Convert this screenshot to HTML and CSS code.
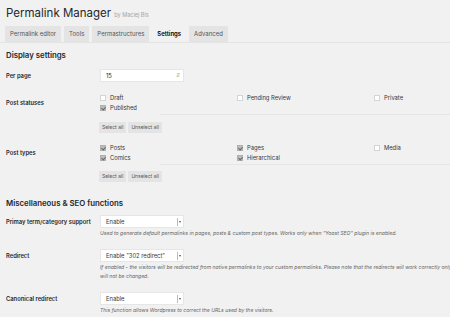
FILE: index.html
```html
<!DOCTYPE html>
<html lang="en">
<head>
    <meta charset="UTF-8">
    <title>Permalink Manager</title>
    <link rel="stylesheet" href="styles.css">
</head>
<body>
<div class="wrap">
    <h1 class="title">Permalink Manager <small>by Maciej Bis</small></h1>
    <ul class="tabs">
        <li>Permalink editor</li>
        <li>Tools</li>
        <li>Permastructures</li>
        <li class="on">Settings</li>
        <li>Advanced</li>
    </ul>

    <h2 class="section">Display settings</h2>
    <div class="row row-perpage">
        <div class="label">Per page</div>
        <div class="field">
            <div class="input">15<span class="spin">&#8693;</span></div>
        </div>
    </div>
    <div class="row row-checks">
        <div class="label">Post statuses</div>
        <div class="field">
            <div class="checks">
                <div class="col">
                    <label class="check"><span class="box"></span>Draft</label>
                    <label class="check"><span class="box checked"></span>Published</label>
                </div>
                <div class="col">
                    <label class="check"><span class="box"></span>Pending Review</label>
                </div>
                <div class="col">
                    <label class="check"><span class="box"></span>Private</label>
                </div>
            </div>
            <div class="btns"><span class="btn">Select all</span><span class="btn">Unselect all</span></div>
        </div>
    </div>
    <div class="row row-checks row-types">
        <div class="label">Post types</div>
        <div class="field">
            <div class="checks">
                <div class="col">
                    <label class="check"><span class="box checked"></span>Posts</label>
                    <label class="check"><span class="box checked"></span>Comics</label>
                </div>
                <div class="col">
                    <label class="check"><span class="box checked"></span>Pages</label>
                    <label class="check"><span class="box checked"></span>Hierarchical</label>
                </div>
                <div class="col">
                    <label class="check"><span class="box"></span>Media</label>
                </div>
            </div>
            <div class="btns"><span class="btn">Select all</span><span class="btn">Unselect all</span></div>
        </div>
    </div>

    <h2 class="section section-misc">Miscellaneous &amp; SEO functions</h2>
    <div class="row row-select row-first">
        <div class="label">Primay term/category support</div>
        <div class="field">
            <div class="select">Enable<span class="arrow"></span></div>
            <p class="desc">Used to generate default permalinks in pages, posts &amp; custom post types. Works only when "Yoast SEO" plugin is enabled.</p>
        </div>
    </div>
    <div class="row row-select">
        <div class="label">Redirect</div>
        <div class="field">
            <div class="select">Enable "302 redirect"<span class="arrow"></span></div>
            <p class="desc">If enabled - the visitors will be redirected from native permalinks to your custom permalinks. Please note that the redirects will work correctly only<br>will not be changed.</p>
        </div>
    </div>
    <div class="row row-select">
        <div class="label">Canonical redirect</div>
        <div class="field">
            <div class="select">Enable<span class="arrow"></span></div>
            <p class="desc">This function allows Wordpress to correct the URLs used by the visitors.</p>
        </div>
    </div>
</div>
</body>
</html>
```

FILE: styles.css
```css
*{
    margin: 0;
    padding: 0;
    list-style: none;
    box-sizing: border-box;
}
html,body{
    background: #f1f1f1;
    overflow: hidden;
}
body{
    font-family: Inter, "Liberation Sans", sans-serif;
    color: #23282d;
    font-size: 6px;
}
.wrap{
    padding: 5px 0 0 6px;
}
.title{
    font-size: 11.5px;
    font-weight: 400;
    line-height: 16px;
    color: #23282d;
    white-space: nowrap;
}
.title small{
    font-size: 5.5px;
    color: #a0a5aa;
}
.tabs{
    display: flex;
    gap: 3px;
    margin: 3px -6px 0 -6px;
    padding-left: 5px;
    border-bottom: 1px solid #e4e4e4;
    height: 17px;
}
.tabs li{
    background: #e4e4e4;
    color: #555;
    font-size: 6px;
    line-height: 16px;
    padding: 0 5px;
    height: 16px;
    white-space: nowrap;
}
.tabs li.on{
    background: #f1f1f1;
    color: #000;
    font-weight: 600;
}
.section{
    font-size: 7.8px;
    font-weight: 600;
    line-height: 10px;
    margin-top: 7px;
    color: #23282d;
}
.section-misc{
    margin-top: 16px;
}
.row{
    display: grid;
    grid-template-columns: 94px 1fr;
    align-items: start;
}
.label{
    font-weight: 600;
    font-size: 5.8px;
    line-height: 7px;
}
.row-perpage{
    margin-top: 9px;
    align-items: center;
}
.input,.select{
    width: 84px;
    height: 13px;
    background: #fff;
    border: 1px solid #e6e6e6;
    font-size: 5.8px;
    line-height: 11px;
    padding-left: 5px;
    position: relative;
    white-space: nowrap;
}
.spin{
    position: absolute;
    right: 3px;
    top: 0;
    color: #aaa;
    font-size: 5px;
}
.row-checks{
    margin-top: 12px;
}
.row-types{
    margin-top: 11px;
}
.row-checks .label{
    margin-top: 5px;
}
.checks{
    display: grid;
    grid-template-columns: 137px 137px 1fr;
    background: linear-gradient(#e6e6e6, #e6e6e6) no-repeat 60px 100% / calc(100% - 60px) 1px;
    padding-bottom: 4px;
}
.checks .col{
    display: flex;
    flex-direction: column;
    gap: 3px;
}
.check{
    display: flex;
    align-items: center;
    gap: 4px;
    font-size: 5.8px;
    line-height: 7px;
    color: #32373c;
    white-space: nowrap;
}
.box{
    width: 6px;
    height: 6px;
    background: #fff;
    border: 1px solid #d4d4d4;
    display: inline-block;
    flex: none;
}
.box.checked{
    background: #bdbdbd;
    border-color: #b0b0b0;
    position: relative;
}
.box.checked::after{
    content: "";
    position: absolute;
    left: 1px;
    top: 0;
    width: 2px;
    height: 3px;
    border: solid #666;
    border-width: 0 1px 1px 0;
    transform: rotate(45deg);
}
.btns{
    display: flex;
    gap: 2px;
    margin-top: 7px;
    margin-left: -1px;
}
.row-types .btns{
    margin-top: 6px;
}
.btn{
    background: #e4e4e4;
    color: #555;
    font-size: 5px;
    line-height: 11px;
    padding: 0 3px;
    white-space: nowrap;
}
.row-select{
    margin-top: 11px;
}
.row-first{
    margin-top: 7px;
}
.row-select .label{
    margin-top: 3px;
}
.select{
    color: #32373c;
}
.arrow{
    position: absolute;
    right: 0;
    top: 2px;
    width: 6px;
    height: 8px;
    border-left: 1px solid #bbb;
}
.arrow::after{
    content: "";
    position: absolute;
    left: 1px;
    top: 3px;
    border-left: 1.5px solid transparent;
    border-right: 1.5px solid transparent;
    border-top: 2px solid #555;
}
.desc{
    font-size: 5.1px;
    font-style: italic;
    color: #666;
    line-height: 9px;
    margin-top: 1px;
    white-space: nowrap;
}
```
